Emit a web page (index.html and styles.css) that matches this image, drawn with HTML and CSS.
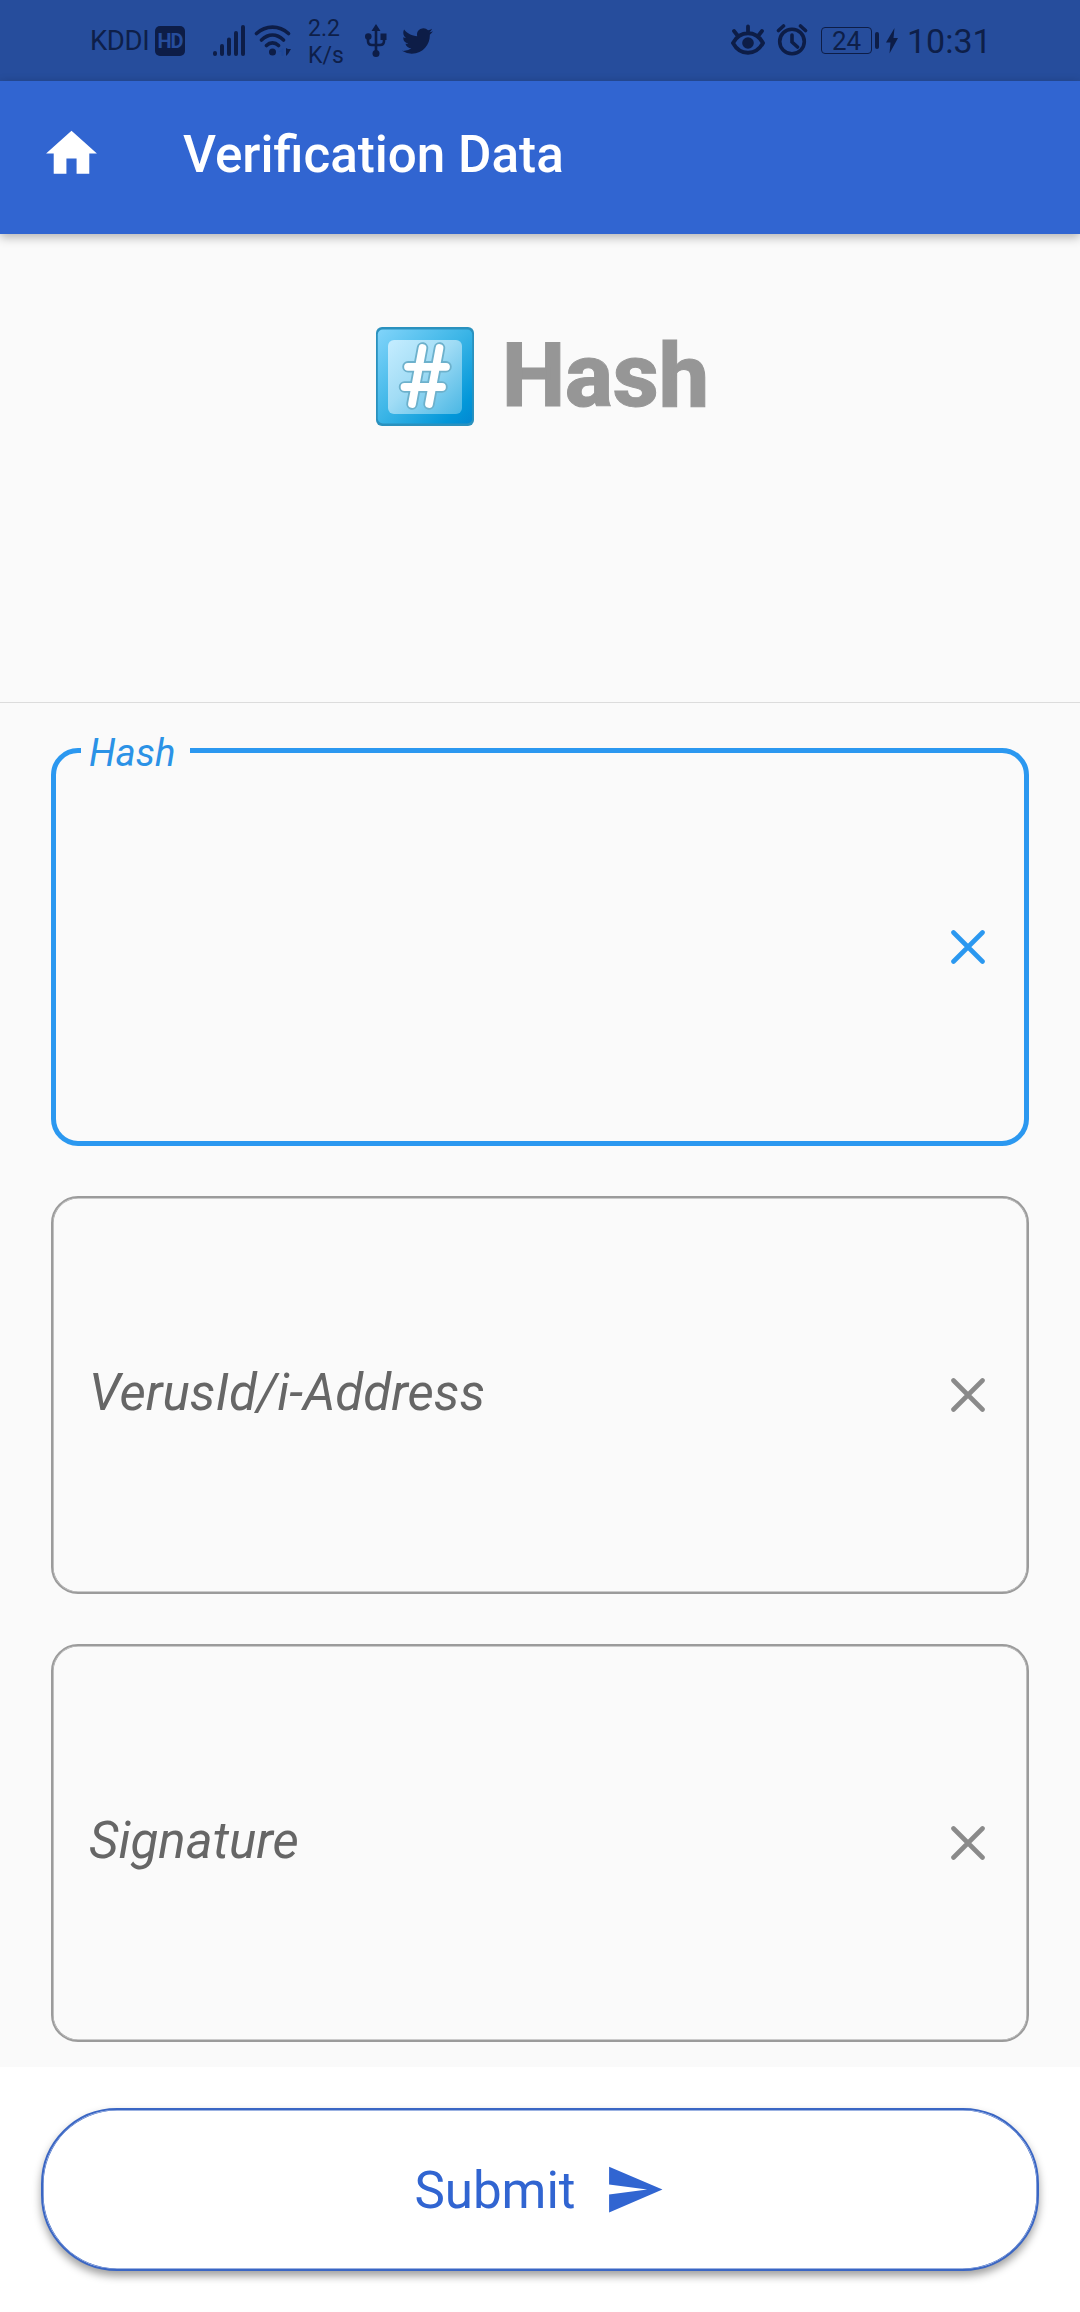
FILE: index.html
```html
<!DOCTYPE html>
<html lang="en">
<head>
<meta charset="utf-8">
<title>Verification Data</title>
<link rel="stylesheet" href="styles.css">
</head>
<body>
<div class="screen">
  <div class="status">
    <div class="status-group">
      <span class="carrier">KDDI</span>
      <span class="hd">HD</span>
      <svg class="signal" width="34" height="32" viewBox="0 0 34 32"><path d="M3 29v1M10 22v8M17 15.500v14.500M24 9v21M31 3v27"/></svg>
      <svg class="wifi" width="38" height="32" viewBox="0 0 38 32"><path d="M2.500 9.500C12 1 25 1 34.500 9.500M7.500 16C14.500 9.500 22.500 9.500 29.500 16M12.500 21.500C16 18 21 18 24.500 21.500"/><circle cx="18.500" cy="28" r="3.500"/><path class="wifi-up" d="M29.500 24v8h-2v-4h-3z"/><path class="wifi-down" d="M32 24v8l2-2 3-5h-3z"/></svg>
      <span class="speed">2.2<br>K/s</span>
      <svg class="usb" width="22" height="34" viewBox="0 0 22 34"><path class="line" d="M11 6v23M3 12v5q0 4 4 4h8q4 0 4-4v-5"/><path d="M11 0l4.500 7h-9zM15.500 9.500h6v6.500h-6z"/><circle cx="3.300" cy="12.500" r="3.300"/><circle cx="11" cy="29.500" r="3.500"/></svg>
      <svg class="bird" width="31" height="26" viewBox="0 2 24 20" preserveAspectRatio="none"><path d="M23.953 4.570a10 10 0 01-2.825.775 4.958 4.958 0 002.163-2.723c-.951.555-2.005.959-3.127 1.184a4.920 4.920 0 00-8.384 4.482C7.690 8.095 4.067 6.130 1.640 3.162a4.822 4.822 0 00-.666 2.475c0 1.710.87 3.213 2.188 4.096a4.904 4.904 0 01-2.228-.616v.060a4.923 4.923 0 003.946 4.827 4.996 4.996 0 01-2.212.085 4.936 4.936 0 004.604 3.417 9.867 9.867 0 01-6.102 2.105c-.39 0-.779-.023-1.170-.067a13.995 13.995 0 007.557 2.209c9.053 0 13.998-7.496 13.998-13.985 0-.21 0-.42-.015-.63A9.935 9.935 0 0024 4.590z"/></svg>
    </div>
    <div class="status-group">
      <svg class="eye" width="34" height="32" viewBox="0 0 34 32"><path class="line" d="M2 19C9 6 25 6 32 19C25 32 9 32 2 19zM17 2.500v6M3 7l3.500 4.500M31 7l-3.500 4.500"/><circle cx="17" cy="19" r="5.800"/></svg>
      <svg class="alarm" width="32" height="32" viewBox="0 0 32 32"><circle cx="16" cy="17.500" r="12.300"/><path d="M16 11v7l5.500 5M2.500 6.500l5-4.500M29.500 6.500l-5-4.500"/></svg>
      <span class="battery">24</span>
      <span class="nub"></span>
      <svg class="bolt" width="12" height="26" viewBox="0 0 12 26"><path d="M8.500 0L0 14.500h4.500L3.500 25.500 12 10H7.500z"/></svg>
      <span class="clock">10:31</span>
    </div>
  </div>

  <header class="appbar">
    <svg class="home" width="61" height="61" viewBox="0 0 24 24"><path d="M10 20v-6h4v6h5v-8h3L12 3 2 12h3v8z"/></svg>
    <h1>Verification Data</h1>
  </header>

  <section class="hero">
    <svg class="keycap" width="98" height="99" viewBox="0 0 98 99">
      <defs>
        <linearGradient id="outer" x1="0" y1="0" x2="1" y2="1"><stop offset="0" stop-color="#81d4fa"/><stop offset=".5" stop-color="#39b4e6"/><stop offset=".85" stop-color="#0397d9"/><stop offset="1" stop-color="#0288d1"/></linearGradient>
        <linearGradient id="inner" x1="0" y1="0" x2="1" y2="1"><stop offset="0" stop-color="#c5edff"/><stop offset=".45" stop-color="#a1dcf5"/><stop offset="1" stop-color="#4ab7e4"/></linearGradient>
      </defs>
      <rect width="98" height="99" rx="6" fill="#2a91be"/>
      <rect x="1.800" y="2.500" width="94.400" height="94" rx="5" fill="url(#outer)"/>
      <rect x="12" y="13" width="74" height="74" rx="6" fill="url(#inner)"/>
      <g fill="none" stroke-linecap="round">
        <path stroke="#6db1cc" stroke-width="11.500" d="M46.500 21L36 77M63.500 21L53 77M32 39.800H70M28.500 60H66"/>
        <path stroke="#fff" stroke-width="7.800" d="M46.500 21L36 77M63.500 21L53 77M32 39.800H70M28.500 60H66"/>
      </g>
    </svg>
    <h2>Hash</h2>
  </section>

  <main class="form">
    <fieldset class="field focused">
      <legend>Hash</legend>
      <svg class="clear" width="34" height="34" viewBox="0 0 34 34"><path d="M2.500 2.500l29 29M31.500 2.500l-29 29"/></svg>
    </fieldset>
    <div class="field">
      <span class="hint">VerusId/i-Address</span>
      <svg class="clear" width="34" height="34" viewBox="0 0 34 34"><path d="M2.500 2.500l29 29M31.500 2.500l-29 29"/></svg>
    </div>
    <div class="field">
      <span class="hint">Signature</span>
      <svg class="clear" width="34" height="34" viewBox="0 0 34 34"><path d="M2.500 2.500l29 29M31.500 2.500l-29 29"/></svg>
    </div>
  </main>

  <footer class="actions">
    <button class="submit" type="button">
      <span>Submit</span>
      <svg width="61" height="61" viewBox="0 0 24 24"><path d="M2.010 21L23 12 2.010 3 2 10l15 2-15 2z"/></svg>
    </button>
  </footer>
</div>
</body>
</html>
```
FILE: styles.css
```css
* { box-sizing: border-box; }
body { margin: 0; font-family: Roboto, sans-serif; background: #fafafa; }
svg { display: block; flex: none; }
.screen { width: 1080px; height: 2312px; display: flex; flex-direction: column; overflow: hidden; }

.status { height: 81px; flex: none; display: flex; justify-content: space-between; padding: 0 93px 0 90px; background: #264d9c; color: #0e1f49; fill: #0d1d47; }
.status-group { display: flex; align-items: flex-start; white-space: nowrap; }
.carrier { width: 60px; margin: 25px 5px 0 0; font-size: 27.500px; line-height: 32px; letter-spacing: -.4px; }
.hd { width: 30px; height: 30px; margin: 26px 27px 0 0; border-radius: 5px; background: #0d1d47; color: #264d9c; font-size: 20px; font-weight: 700; line-height: 31px; text-align: center; letter-spacing: -1px; }
.signal { margin: 24px 8px 0 0; fill: none; stroke: #0d1d47; stroke-width: 4; stroke-linecap: round; }
.wifi { margin: 24px 16px 0 0; }
.wifi path { fill: none; stroke: #0d1d47; stroke-width: 3.6; stroke-linecap: round; }
.wifi .wifi-up { fill: #1f4a9c; stroke: none; }
.wifi .wifi-down { fill: #0d1d47; stroke: none; }
.speed { width: 38px; margin: 15px 19px 0 0; font-size: 23px; line-height: 27px; }
.usb { margin: 24px 15px 0 0; }
.line { fill: none; stroke: #0d1d47; stroke-width: 2.6; stroke-linecap: round; }
.bird { margin-top: 28px; }
.eye { margin: 24px 11px 0 0; }
.eye .line { stroke-width: 3.8; }
.alarm { margin: 24px 13px 0 0; fill: none; stroke: #0d1d47; stroke-width: 3.6; stroke-linecap: round; }
.battery { width: 51px; height: 27px; margin: 27px 3px 0 0; border: 1px solid #0d1d47; border-radius: 4px; font-size: 26px; line-height: 26px; text-align: center; }
.nub { width: 4px; height: 17px; margin: 32px 7px 0 0; border-radius: 2px; background: #0d1d47; }
.bolt { margin: 28px 9px 0 0; }
.clock { width: 80px; margin: 21px 0 0; font-size: 34px; line-height: 40px; }

.appbar { height: 153px; flex: none; display: flex; align-items: center; gap: 81px; padding: 0 41px 8px; background: #3165d1; color: #fff; box-shadow: 0 3px 10px rgba(0,0,0,.3); z-index: 1; }
.home { fill: #fff; }
.appbar h1 { margin: 2px 0 0; font-size: 51.200px; font-weight: 500; line-height: 60px; }

.hero { height: 469px; flex: none; display: flex; align-items: flex-start; justify-content: center; gap: 28px; padding: 93px 0 0 5px; border-bottom: 1px solid #dcdcdc; }
.hero h2 { margin: -4px 0 0; font-size: 89.600px; font-weight: 800; line-height: 106px; color: #969696; -webkit-text-stroke: 1px #969696; }

.form { flex: none; height: 1364px; display: flex; flex-direction: column; gap: 50px; padding: 45px 51px 0; }
.field { flex: none; height: 398px; margin: 0; padding: 0 42.500px 7px 36px; border: 2px solid #9b9b9b; border-radius: 27px; box-shadow: inset 0 0 0 .6px #9b9b9b; display: flex; align-items: center; color: #666; }
.clear { margin: 6px 0 0 auto; fill: none; stroke: #8a8a8a; stroke-width: 4.600; stroke-linecap: round; }
.focused { border: 5px solid #2b98f0; padding: 0 39px 0 0; box-shadow: none; color: #2b92e6; }
.focused legend { height: 5px; margin-left: 25px; padding: 0 15px 0 8px; font-size: 38.300px; font-style: italic; line-height: 9px; }
.focused .clear { margin-top: 177px; stroke: #2b98f0; }
.hint { margin-top: 2px; font-size: 51.100px; font-style: italic; line-height: 60px; }

.actions { flex: 1; padding: 41px; background: #fff; }
.submit { width: 998px; height: 163px; padding: 0 1px 0 0; border: 2px solid #3a66c4; border-radius: 76px; background: #fff; box-shadow: inset 0 0 0 .6px #3a66c4, 0 5px 9px rgba(0,0,0,.38); display: flex; align-items: center; justify-content: center; gap: 28px; font: 51.100px/60px Roboto, sans-serif; color: #3165d1; }
.submit span { margin-top: 3px; }
.submit svg { fill: #3165d1; }
```
